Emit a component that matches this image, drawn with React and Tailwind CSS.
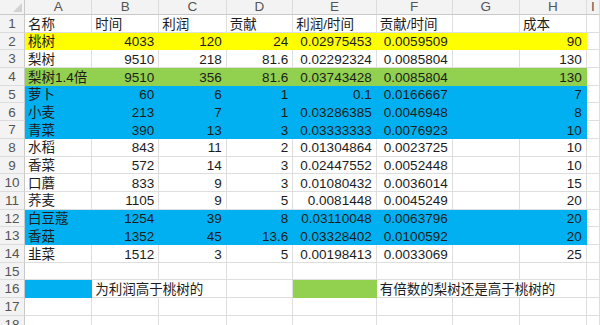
import React from 'react';

const cols = ['A', 'B', 'C', 'D', 'E', 'F', 'G', 'H', 'I'];

// fill per row: y = yellow, g = green, b = blue
const rows = [
  { fill: '', cells: ['名称', '时间', '利润', '贡献', '利润/时间', '贡献/时间', '', '成本'], head: true },
  { fill: 'y', cells: ['桃树', '4033', '120', '24', '0.02975453', '0.0059509', '', '90'] },
  { fill: '', cells: ['梨树', '9510', '218', '81.6', '0.02292324', '0.0085804', '', '130'] },
  { fill: 'g', cells: ['梨树1.4倍', '9510', '356', '81.6', '0.03743428', '0.0085804', '', '130'] },
  { fill: 'b', cells: ['萝卜', '60', '6', '1', '0.1', '0.0166667', '', '7'] },
  { fill: 'b', cells: ['小麦', '213', '7', '1', '0.03286385', '0.0046948', '', '8'] },
  { fill: 'b', cells: ['青菜', '390', '13', '3', '0.03333333', '0.0076923', '', '10'] },
  { fill: '', cells: ['水稻', '843', '11', '2', '0.01304864', '0.0023725', '', '10'] },
  { fill: '', cells: ['香菜', '572', '14', '3', '0.02447552', '0.0052448', '', '10'] },
  { fill: '', cells: ['口蘑', '833', '9', '3', '0.01080432', '0.0036014', '', '15'] },
  { fill: '', cells: ['荞麦', '1105', '9', '5', '0.0081448', '0.0045249', '', '20'] },
  { fill: 'b', cells: ['白豆蔻', '1254', '39', '8', '0.03110048', '0.0063796', '', '20'] },
  { fill: 'b', cells: ['香菇', '1352', '45', '13.6', '0.03328402', '0.0100592', '', '20'] },
  { fill: '', cells: ['韭菜', '1512', '3', '5', '0.00198413', '0.0033069', '', '25'] },
];

const fills = {
  y: 'bg-[#ffff00] border-[#ffff00]',
  g: 'bg-[#92d050] border-[#92d050]',
  b: 'bg-[#00b0f0] border-[#00b0f0]',
  '': 'bg-white border-[#dedede]',
};

function RowNum({ n }) {
  return (
    <div className="h-[17.7px] flex items-center justify-center bg-[#f3f3f3] border-r border-b border-r-[#c9c9c9] border-b-[#dcdcdc] text-[#555] text-[13.5px] leading-none pt-px">
      {n}
    </div>
  );
}

function Cell({ text = '', fill = '', left = false, span = '' }) {
  return (
    <div
      className={`h-[17.7px] flex items-center border-r border-b whitespace-nowrap overflow-hidden leading-none pt-[2px] text-[13.5px] text-[#1c1c1c] ${
        left ? 'justify-start pl-[3px]' : 'justify-end pr-[4px]'
      } ${fills[fill]} ${span}`}
    >
      {text}
    </div>
  );
}

function EmptyRow({ n }) {
  return (
    <>
      <RowNum n={n} />
      {cols.map((c) => (
        <Cell key={c} />
      ))}
    </>
  );
}

export default function App() {
  return (
    <div
      className="w-[600px] h-[325px] overflow-hidden bg-white"
      style={{ fontFamily: '"Liberation Sans", "Noto Sans CJK SC", sans-serif' }}
    >
      <div className="grid grid-cols-[25px_67.3px_67px_67.4px_66.6px_83.4px_76px_67.3px_66.7px_1fr]">
        {/* column headers */}
        <div className="h-[15px] bg-[#f3f3f3] border-r border-b border-[#c9c9c9] flex items-end justify-end pr-[2px] pb-[2px]">
          <svg width="9" height="9" viewBox="0 0 9 9">
            <polygon points="9,0 9,9 0,9" fill="#d2d2d2" />
          </svg>
        </div>
        {cols.map((c) => (
          <div
            key={c}
            className="h-[15px] bg-[#f3f3f3] border-r border-b border-r-[#dcdcdc] border-b-[#c9c9c9] flex items-center justify-center text-[13.5px] leading-none text-[#555]"
          >
            {c}
          </div>
        ))}

        {rows.map((r, i) => (
          <React.Fragment key={i}>
            <RowNum n={i + 1} />
            {r.cells.map((t, j) => (
              <Cell key={j} text={t} fill={r.fill} left={r.head || j === 0} />
            ))}
            <Cell />
          </React.Fragment>
        ))}

        <EmptyRow n={15} />

        {/* legend row */}
        <RowNum n={16} />
        <Cell fill="b" />
        <Cell text="为利润高于桃树的" left span="col-span-2" />
        <Cell />
        <Cell fill="g" />
        <Cell text="有倍数的梨树还是高于桃树的" left span="col-span-3" />
        <Cell />

        <EmptyRow n={17} />
        <EmptyRow n={18} />
      </div>
    </div>
  );
}
